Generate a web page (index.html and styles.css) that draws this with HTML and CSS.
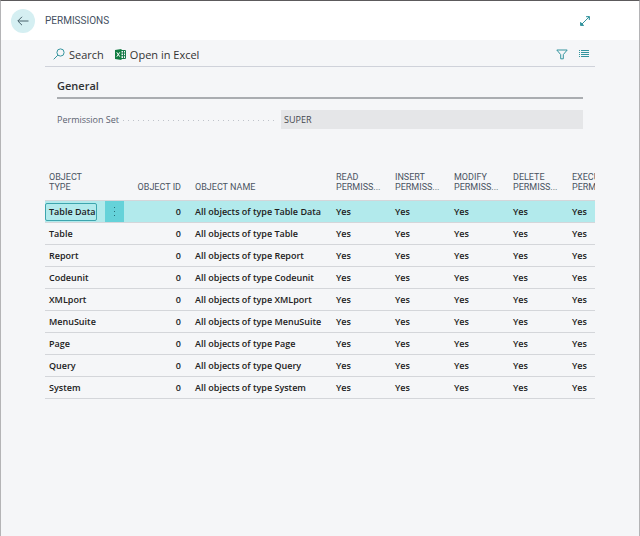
FILE: index.html
```html
<!DOCTYPE html>
<html lang="en">
<head>
<meta charset="utf-8">
<meta name="viewport" content="width=device-width, initial-scale=1">
<title>Permissions</title>
<link rel="stylesheet" href="styles.css">
</head>
<body>
<div class="page">
  <header class="page-header">
    <button class="back" type="button" aria-label="Back">
      <svg width="12" height="10" viewBox="0 0 12 10"><path d="M11.5 5H1M5 .8L.8 5L5 9.200"/></svg>
    </button>
    <h1 class="title">PERMISSIONS</h1>
    <button class="icon-button expand" type="button" aria-label="Expand">
      <svg width="10" height="10" viewBox="0 0 10 10"><path d="M1 9L9 1M6 .7H9.300V4M.7 6V9.300H4"/><path class="solid" d="M.3 7H3V9.700H.3zM7 .3H9.700V3z"/></svg>
    </button>
  </header>
  <main class="content">
    <div class="toolbar">
      <button class="action" type="button">
        <svg class="teal" width="12" height="12" viewBox="0 0 12 12"><circle cx="7.500" cy="4.500" r="3.600"/><path d="M4.900 7.100L.7 11.300"/></svg>
        Search
      </button>
      <button class="action" type="button">
        <svg class="excel" width="11" height="11" viewBox="0 0 11 11"><path class="sheet" d="M6 1.500h4.500v8H6M8.500 1.500v8M6 4h4.500M6 6.700h4.500"/><path class="cover" d="M0 1L6.500 0V11L0 10z"/><path class="mark" d="M1.800 3.300L4.800 7.700M4.800 3.300L1.800 7.700"/></svg>
        Open in Excel
      </button>
      <div class="view-tools">
        <button class="icon-button" type="button" aria-label="Filter">
          <svg width="12" height="11" viewBox="0 0 12 11"><path d="M.8 1H11.200L7.300 5.600V9.800H4.700V5.600z"/></svg>
        </button>
        <button class="icon-button" type="button" aria-label="View as list">
          <svg width="10" height="8" viewBox="0 0 10 8"><path d="M0 .5H1M2 .5H10M0 2.500H1M2 2.500H10M0 4.500H1M2 4.500H10M0 6.500H1M2 6.500H10"/></svg>
        </button>
      </div>
    </div>
    <section class="general">
      <h2 class="section-title">General</h2>
      <div class="field">
        <label class="field-label" for="permission-set">Permission Set</label>
        <input class="field-value" id="permission-set" type="text" value="SUPER" readonly>
      </div>
    </section>
    <div class="list">
      <table class="grid">
        <colgroup><col class="c-type"><col class="c-menu"><col class="c-id"><col class="c-name"><col class="c-perm"><col class="c-perm"><col class="c-perm"><col class="c-perm"><col class="c-perm"></colgroup>
        <thead>
          <tr><th>OBJECT<br>TYPE</th><th class="menu"></th><th class="id">OBJECT ID</th><th class="name">OBJECT NAME</th><th>READ<br>PERMISS...</th><th>INSERT<br>PERMISS...</th><th>MODIFY<br>PERMISS...</th><th>DELETE<br>PERMISS...</th><th>EXECUTE<br>PERMISS...</th></tr>
        </thead>
        <tbody>
          <tr class="selected"><td><span class="focus">Table Data</span></td><td class="menu"><button class="more" type="button" aria-label="More options"><svg width="3" height="11" viewBox="0 0 3 11"><path d="M1 1h1v1H1zM1 5h1v1H1zM1 9h1v1H1z"/></svg></button></td><td class="id">0</td><td class="name">All objects of type Table Data</td><td>Yes</td><td>Yes</td><td>Yes</td><td>Yes</td><td>Yes</td></tr>
          <tr><td>Table</td><td></td><td class="id">0</td><td class="name">All objects of type Table</td><td>Yes</td><td>Yes</td><td>Yes</td><td>Yes</td><td>Yes</td></tr>
          <tr><td>Report</td><td></td><td class="id">0</td><td class="name">All objects of type Report</td><td>Yes</td><td>Yes</td><td>Yes</td><td>Yes</td><td>Yes</td></tr>
          <tr><td>Codeunit</td><td></td><td class="id">0</td><td class="name">All objects of type Codeunit</td><td>Yes</td><td>Yes</td><td>Yes</td><td>Yes</td><td>Yes</td></tr>
          <tr><td>XMLport</td><td></td><td class="id">0</td><td class="name">All objects of type XMLport</td><td>Yes</td><td>Yes</td><td>Yes</td><td>Yes</td><td>Yes</td></tr>
          <tr><td>MenuSuite</td><td></td><td class="id">0</td><td class="name">All objects of type MenuSuite</td><td>Yes</td><td>Yes</td><td>Yes</td><td>Yes</td><td>Yes</td></tr>
          <tr><td>Page</td><td></td><td class="id">0</td><td class="name">All objects of type Page</td><td>Yes</td><td>Yes</td><td>Yes</td><td>Yes</td><td>Yes</td></tr>
          <tr><td>Query</td><td></td><td class="id">0</td><td class="name">All objects of type Query</td><td>Yes</td><td>Yes</td><td>Yes</td><td>Yes</td><td>Yes</td></tr>
          <tr><td>System</td><td></td><td class="id">0</td><td class="name">All objects of type System</td><td>Yes</td><td>Yes</td><td>Yes</td><td>Yes</td><td>Yes</td></tr>
        </tbody>
      </table>
    </div>
  </main>
</div>
</body>
</html>
```
FILE: styles.css
```css
* { box-sizing: border-box; }
body {
  margin: 0;
  background: #f5f6f8;
  color: #212121;
  font-family: "Open Sans", "Noto Sans", sans-serif;
  font-size: 9px;
}
button {
  display: flex;
  align-items: center;
  padding: 0;
  border: 0;
  background: none;
  color: inherit;
  font: inherit;
}
svg { display: block; fill: none; stroke: #34949e; }
.page {
  min-height: 100vh;
  border: 1px solid #b4b4b6;
  border-top-color: #5c5a5c;
  border-bottom: 0;
}
.page-header {
  display: flex;
  align-items: center;
  height: 39px;
  padding: 0 49px 0 10px;
  background: #fff;
}
.back {
  justify-content: center;
  width: 24px;
  height: 24px;
  border-radius: 50%;
  background: #d5eff2;
}
.back svg { stroke: #46616b; }
.title {
  margin: 0 0 0 10px;
  color: #45505f;
  font: 400 10px/14px Roboto, sans-serif;
}
.expand { margin-left: auto; }
.expand .solid { fill: #34949e; stroke: none; }
.content { padding: 0 44px; }
.toolbar {
  display: flex;
  align-items: center;
  gap: 11px;
  height: 27px;
  padding: 2px 6px 0 8px;
  border-bottom: 1px solid #cfd2da;
}
.action { gap: 4px; color: #333; font-size: 11px; }
.action .excel { stroke: #16794a; }
.excel .cover { fill: #107c41; stroke: none; }
.excel .mark { stroke: #fff; }
.view-tools { display: flex; align-items: center; gap: 11px; margin-left: auto; }
.general { padding: 10px 12px 0; }
.section-title {
  margin: 0;
  padding-bottom: 2px;
  border-bottom: 2px solid #aaadb1;
  color: #303234;
  font-size: 11px;
  font-weight: 600;
  line-height: 18px;
}
.field { display: flex; align-items: center; margin-top: 11px; }
.field-label {
  display: flex;
  align-items: center;
  flex: 0 0 224px;
  color: #5b6270;
}
.field-label::after {
  content: "";
  flex: 1;
  height: 1px;
  margin: 2px 5px 0 4px;
  background: repeating-linear-gradient(90deg, #bfc3ca 0 1px, transparent 1px 5px);
}
.field-value {
  flex: 1;
  min-width: 0;
  height: 19px;
  padding: 0 3px;
  border: 0;
  border-radius: 0;
  background: #e5e6e8;
  color: #44474c;
  font: inherit;
}
.list { margin-top: 36px; overflow: hidden; }
.grid {
  width: calc(100% + 32px);
  border-collapse: separate;
  border-spacing: 0;
  table-layout: fixed;
}
.c-type { width: 60px; }
.c-menu { width: 19px; }
.c-id { width: 62px; }
.c-perm { width: 59px; }
.grid th {
  height: 36px;
  padding: 0 0 8px 4px;
  border-bottom: 1px solid #d4d6da;
  color: #4a5462;
  font: 400 9px/10px Roboto, sans-serif;
  text-align: left;
  vertical-align: bottom;
  white-space: nowrap;
}
.grid td {
  height: 22px;
  padding: 0 0 0 4px;
  border-bottom: 1px solid #d4d6da;
  font-weight: 600;
  line-height: 14px;
  white-space: nowrap;
}
.grid .menu { padding: 0; }
.grid .id { padding: 0 5px 0 0; text-align: right; }
.grid th.id { padding-bottom: 8px; }
.grid .name { padding-left: 9px; }
.selected td { background: #b2eaec; }
.focus {
  display: inline-block;
  margin-left: -4px;
  padding: 1px 0 1px 3px;
  border: 1px solid #3da5ae;
  border-radius: 2px;
}
.grid .menu .more {
  justify-content: center;
  width: 100%;
  height: 21px;
  background: #65d2d9;
}
.more svg { fill: #286f78; stroke: none; }
```
